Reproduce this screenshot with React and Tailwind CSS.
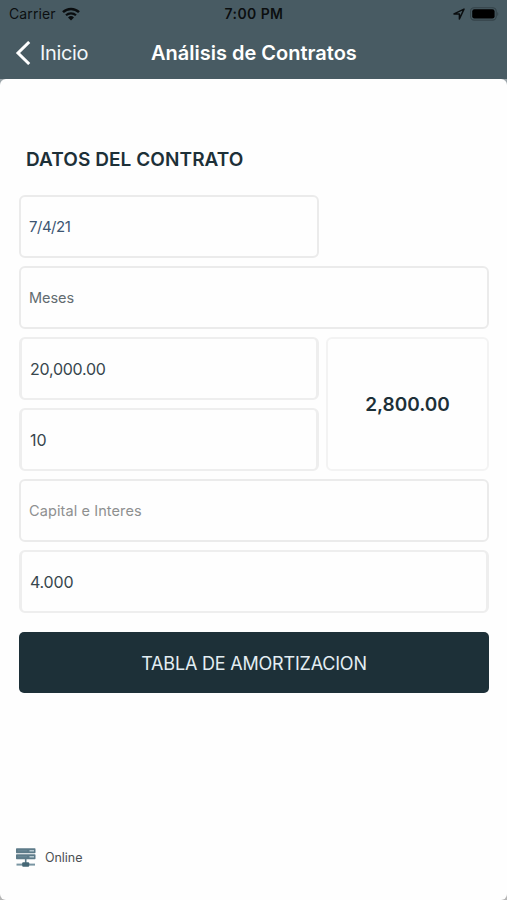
function StatusBar() {
  return (
    <div className="flex h-[27px] items-center pl-[9px] pr-[8px] text-black/85">
      <div className="flex flex-1 items-center">
        <span className="text-[14px] leading-[17px] tracking-[0.1px]">Carrier</span>
        <svg className="ml-[6px]" width="18" height="14" viewBox="0 0 18 14">
          <path d="M1 5.2a11.4 11.4 0 0 1 16 0" fill="none" stroke="currentColor" strokeWidth="2.5" />
          <path d="M4 8.3a7.2 7.2 0 0 1 10 0" fill="none" stroke="currentColor" strokeWidth="2.2" />
          <path d="M9 13.6 6 10.5a4.3 4.3 0 0 1 6 0z" fill="currentColor" />
        </svg>
      </div>
      <span className="text-[14px] font-semibold leading-[17px] tracking-[0.4px]">7:00 PM</span>
      <div className="flex flex-1 items-center justify-end">
        <svg width="12" height="12" viewBox="0 0 12 12" className="mr-[5px]">
          <path d="M1 5.9 11 1.1 6.4 11V5.9z" fill="none" stroke="currentColor" strokeWidth="1.5" strokeLinejoin="round" />
        </svg>
        <svg width="29" height="14" viewBox="0 0 29 14">
          <rect x="0.6" y="0.7" width="25.6" height="12.4" rx="3.6" fill="none" stroke="#344349" strokeWidth="1.1" />
          <rect x="2.2" y="2.3" width="22.4" height="9.2" rx="2.2" fill="#000" />
          <path d="M27.3 5v4c1.3-.5 1.3-3.5 0-4z" fill="#344349" />
        </svg>
      </div>
    </div>
  );
}

function NavBar() {
  return (
    <div className="flex h-[52px] items-center pl-[15px] text-white">
      <svg width="16" height="24" viewBox="0 0 16 24">
        <path d="M14.2 1 3 12l11.2 11" fill="none" stroke="currentColor" strokeWidth="3" />
      </svg>
      <span className="ml-[9px] w-[111px] text-[20px] leading-6 tracking-[-0.35px] text-[#f1f7fa]">Inicio</span>
      <h1 className="whitespace-nowrap text-[20px] font-semibold leading-6">Análisis de Contratos</h1>
    </div>
  );
}

function ServerIcon() {
  return (
    <svg width="20" height="19" viewBox="0 0 20 19">
      <rect x="0" y="0.3" width="19.5" height="5" rx="0.7" fill="#5d7b89" />
      <rect x="0" y="6.2" width="19.5" height="5" rx="0.7" fill="#5d7b89" />
      <path d="M2 2.8h9M2 8.7h9" stroke="#6f8c99" strokeWidth="0.8" />
      <path d="M13.5 2.8h4.5M13.5 8.7h4.5" stroke="#b5c7cf" strokeWidth="1.4" />
      <path d="M9.7 11v5" stroke="#5d7b89" strokeWidth="1.6" />
      <path d="M0.5 16.6h18.5" stroke="#7995a2" strokeWidth="2" />
      <rect x="6.2" y="14.2" width="7" height="4.6" rx="1" fill="#456775" />
    </svg>
  );
}

export default function App() {
  return (
    <div className="h-[900px] w-[507px] bg-[#485b63] font-['Inter',sans-serif]">
      <header className="h-[79px]">
        <StatusBar />
        <NavBar />
      </header>

      <div className="h-[821px] bg-[linear-gradient(#9aa4a9_50%,#b5b5b5_50%)]">
        <main className="flex h-full flex-col rounded-[6px] bg-[#fefefe] pl-[19px] pr-[18px]">
          <h2 className="ml-[7px] mt-[69px] text-[19px] font-semibold leading-6 tracking-[0.07px] text-[#1d3038]">
            DATOS DEL CONTRATO
          </h2>

          <form className="mt-[23px] flex flex-col gap-2 text-[16px] text-[#37464d]">
            <div className="flex h-[63px] w-[300px] items-center rounded-[6px] border-2 border-[#ebebeb] pl-[8px] pt-[2px] text-[15px] tracking-[-0.5px] text-[#3c5572]">
              7/4/21
            </div>
            <div className="flex h-[63px] items-center rounded-[6px] border-2 border-[#ebebeb] pl-[8px] pt-[1px] text-[14.5px] tracking-[-0.05px] text-[#626c70]">
              Meses
            </div>
            <div className="flex gap-[7px]">
              <div className="flex w-[300px] flex-col gap-2">
                <div className="flex h-[63px] items-center rounded-[6px] border-x-3 border-y-2 border-[#eeeeee] pl-[8px] tracking-[-0.25px]">
                  20,000.00
                </div>
                <div className="flex h-[63px] items-center rounded-[6px] border-x-3 border-y-2 border-[#eeeeee] pl-[8px]">
                  10
                </div>
              </div>
              <div className="flex flex-1 items-center justify-center rounded-[6px] border-2 border-[#f3f3f3] pt-[2px] text-[19px] font-semibold text-[#1d3038]">
                2,800.00
              </div>
            </div>
            <div className="flex h-[63px] items-center rounded-[6px] border-2 border-[#ebebeb] pl-[8px] text-[14.5px] tracking-[0.1px] text-[#8e9090]">
              Capital e Interes
            </div>
            <div className="flex h-[63px] items-center rounded-[6px] border-x-3 border-y-2 border-[#eeeeee] pl-[8px] tracking-[-0.2px]">
              4.000
            </div>
          </form>

          <button className="mt-[19px] h-[61px] rounded-[5px] bg-[#1d3038] pt-[2px] text-[18px] tracking-[-0.2px] text-[#e3edf2]">
            TABLA DE AMORTIZACION
          </button>

          <footer className="mb-[33px] ml-[-3px] mt-auto flex items-center gap-[9px] text-[12.5px] leading-[19px] tracking-[-0.05px] text-[#4c5154]">
            <ServerIcon />
            <span>Online</span>
          </footer>
        </main>
      </div>
    </div>
  );
}
